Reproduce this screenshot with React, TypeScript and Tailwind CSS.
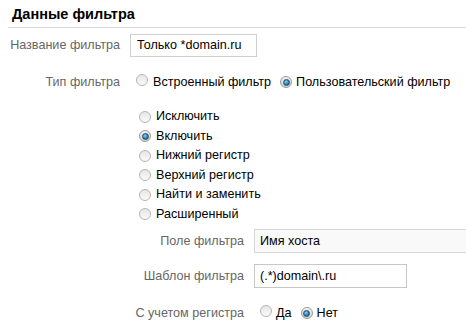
import React from 'react';

const Radio: React.FC<{ checked?: boolean }> = ({ checked }) => (
  <span
    className={
      'inline-flex h-[12px] w-[12px] shrink-0 items-center justify-center rounded-full border ' +
      (checked
        ? 'border-[#9a9a9a] bg-[linear-gradient(#f2f2f2,#d4d4d4)]'
        : 'border-[#b5b5b5] bg-[linear-gradient(#e6e6e6,#fafafa)]')
    }
  >
    {checked && (
      <span className="h-[7px] w-[7px] rounded-full border border-[#1d4f6e] bg-[radial-gradient(circle_at_40%_35%,#8fd0f0,#2a78a8_60%,#1c5b82)]" />
    )}
  </span>
);

const App: React.FC = () => {
  const options = [
    { label: 'Исключить', checked: false },
    { label: 'Включить', checked: true },
    { label: 'Нижний регистр', checked: false },
    { label: 'Верхний регистр', checked: false },
    { label: 'Найти и заменить', checked: false },
    { label: 'Расширенный', checked: false },
  ];

  return (
    <div className="h-[330px] w-[466px] overflow-hidden whitespace-nowrap bg-white font-['Liberation_Sans',Arial,sans-serif] text-[12.6px] text-black">
      <div className="pl-[8px]">
        <h2 className="h-[28px] border-b border-[#dcdcdc] pl-[4px] pt-[5px] text-[14.5px] font-bold leading-[18px]">
          Данные фильтра
        </h2>

        <div className="mt-[6px] flex items-center">
          <span className="w-[112px] shrink-0 text-right text-[#666]">Название фильтра</span>
          <div className="ml-[10px] flex h-[23px] w-[127px] items-center border border-[#cfcfcf] pl-[6px]">
            Только *domain.ru
          </div>
        </div>

        <div className="mt-[17px] flex h-[16px] items-center">
          <span className="w-[112px] shrink-0 text-right text-[#666]">Тип фильтра</span>
          <span className="ml-[16px]"><Radio /></span>
          <span className="ml-[5px]">Встроенный фильтр</span>
          <span className="ml-[9px]"><Radio checked /></span>
          <span className="ml-[4px]">Пользовательский фильтр</span>
        </div>

        <div className="mt-[17px] flex flex-col pl-[131px]">
          {options.map((o) => (
            <div key={o.label} className="flex h-[19.5px] items-center">
              <Radio checked={o.checked} />
              <span className="ml-[5px]">{o.label}</span>
            </div>
          ))}
        </div>

        <div className="mt-[5px] flex items-center">
          <span className="w-[236px] shrink-0 text-right text-[#666]">Поле фильтра</span>
          <div className="ml-[10px] flex h-[24px] w-[240px] shrink-0 items-center border border-[#d8d8d8] bg-[#f9f9f9] pl-[5px]">
            Имя хоста
          </div>
        </div>

        <div className="mt-[11px] flex items-center">
          <span className="w-[236px] shrink-0 text-right text-[#666]">Шаблон фильтра</span>
          <div className="ml-[10px] flex h-[24px] w-[153px] shrink-0 items-center border border-[#c8c8c8] pl-[5px]">
            (.*)domain\.ru
          </div>
        </div>

        <div className="mt-[17px] flex h-[16px] items-center">
          <span className="w-[236px] shrink-0 text-right text-[#666]">С учетом регистра</span>
          <span className="ml-[16px]"><Radio /></span>
          <span className="ml-[4px]">Да</span>
          <span className="ml-[9px]"><Radio checked /></span>
          <span className="ml-[4px]">Нет</span>
        </div>
      </div>
    </div>
  );
};

export default App;
